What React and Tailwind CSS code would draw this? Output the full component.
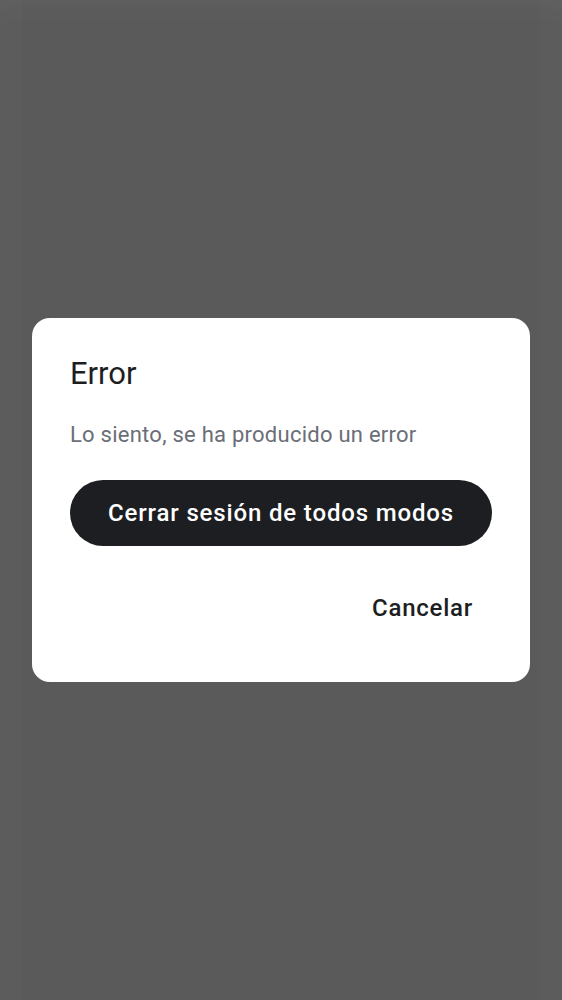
export default function App() {
  return (
    <div className="relative w-[562px] h-[1000px] bg-[#5a5a5a] overflow-hidden" style={{ fontFamily: "Roboto, 'Noto Sans', sans-serif" }}>
      <div className="absolute inset-0 pointer-events-none shadow-[inset_22px_0_0_rgba(255,255,255,0.015),inset_-22px_0_0_rgba(255,255,255,0.015),inset_0_30px_30px_-20px_rgba(255,255,255,0.03)]" />
      <div className="flex h-full items-start justify-center pt-[318px]">
        <div className="w-[498px] h-[364px] bg-white rounded-[18px] pl-[38px] pr-[38px] pt-[34px]">
          <h2 className="text-[31px] leading-[44px] text-[#1d1e22]">Error</h2>
          <p className="mt-[25px] text-[22px] leading-[28px] tracking-[0.25px] text-[#6a6e76]">Lo siento, se ha producido un error</p>
          <button className="mt-[31px] w-full h-[66px] rounded-full bg-[#1d1e22] text-white text-[24px] font-medium tracking-[0.85px]">Cerrar sesión de todos modos</button>
          <div className="flex justify-end mt-[44px] pr-[19px]">
            <button className="text-[24px] font-medium text-[#1d1e22] tracking-[0.75px]">Cancelar</button>
          </div>
        </div>
      </div>
    </div>
  );
}
